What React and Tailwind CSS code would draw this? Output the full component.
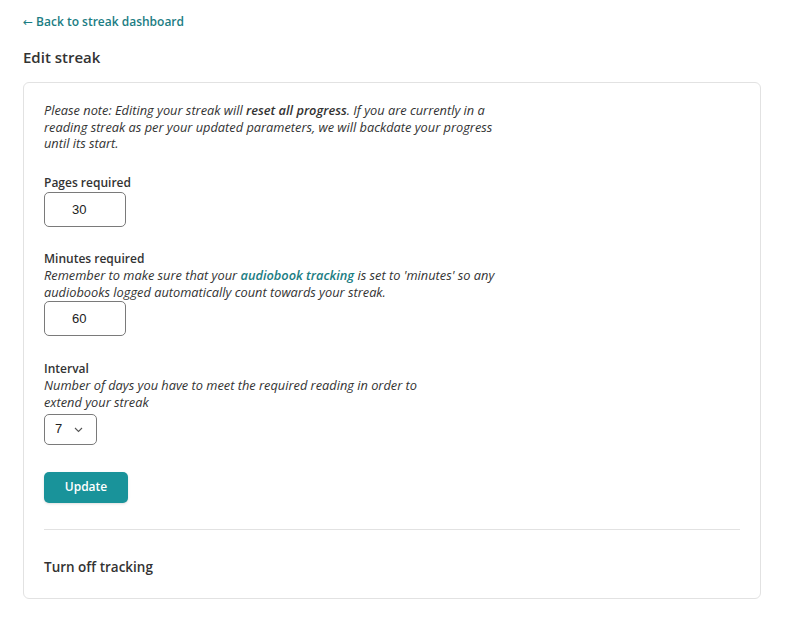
export default function App() {
  return (
    <div className="min-h-screen bg-white pl-[23px] pr-[39px] pt-[14px] text-[#333] font-['Open_Sans',sans-serif]">
      <a href="#" className="flex h-[16px] items-center gap-[3px] text-[12px] font-semibold leading-[16px] text-[#1b7d83]">
        <span className="font-['DejaVu_Sans',sans-serif] text-[12px] font-normal">←</span>
        <span>Back to streak dashboard</span>
      </a>
      <h1 className="mt-[17px] h-[20px] text-[15px] font-semibold leading-[20px] text-[#333]">Edit streak</h1>

      <div className="mt-[15px] rounded-[6px] border border-[#e2e2e2] px-[20px] pt-[19px] pb-[22px]">
        <p className="text-[12.8px] italic leading-[16.5px] text-[#333]">
          Please note: Editing your streak will <span className="font-semibold">reset all progress</span>. If you are currently in a<br />
          reading streak as per your updated parameters, we will backdate your progress<br />
          until its start.
        </p>

        <label className="mt-[23px] block text-[12px] font-semibold leading-[16px]">Pages required</label>
        <input type="text" defaultValue="30" className="mt-[1px] h-[35px] w-[82px] rounded-[5px] border border-[#7a7a7a] px-[27px] text-[13px] text-[#222] font-['Liberation_Sans',Arial,sans-serif] outline-none" />

        <label className="mt-[24px] block text-[12px] font-semibold leading-[16px]">Minutes required</label>
        <p className="text-[12.8px] italic leading-[17px]">
          Remember to make sure that your <a href="#" className="font-semibold text-[#1b7d83]">audiobook tracking</a> is set to 'minutes' so any<br />audiobooks logged automatically count towards your streak.
        </p>
        <input type="text" defaultValue="60" className="h-[35px] w-[82px] rounded-[5px] border border-[#7a7a7a] px-[27px] text-[13px] text-[#222] font-['Liberation_Sans',Arial,sans-serif] outline-none" />

        <label className="mt-[25px] block text-[12px] font-semibold leading-[16px]">Interval</label>
        <p className="text-[12.8px] italic leading-[17px]">
          Number of days you have to meet the required reading in order to<br />extend your streak
        </p>
        <div className="relative mt-[3px] flex h-[31px] w-[53px] items-center rounded-[5px] border border-[#7a7a7a] pl-[10px] text-[13px] text-[#222] font-['Liberation_Sans',Arial,sans-serif]">
          7
          <svg className="absolute right-[13px] top-[12px]" width="9" height="6" viewBox="0 0 9 6" fill="none">
            <path d="M1 1l3.5 3.5L8 1" stroke="#555" strokeWidth="1.1" />
          </svg>
        </div>

        <button className="mt-[27px] block h-[31px] w-[84px] rounded-[5px] bg-[#19939a] text-[12px] font-semibold text-white shadow-sm">Update</button>

        <div className="mt-[26px] border-t border-[#e2e2e2]" />

        <p className="mt-[28px] text-[13.5px] font-semibold leading-[18px] text-[#333]">Turn off tracking</p>
      </div>
    </div>
  );
}
